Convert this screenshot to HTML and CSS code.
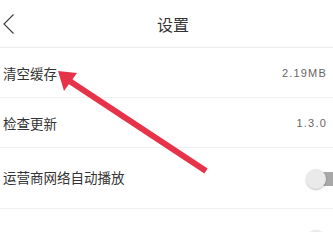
FILE: index.html
```html
<!DOCTYPE html>
<html lang="zh-CN">
<head>
  <meta charset="UTF-8">
  <meta name="viewport" content="width=device-width, initial-scale=1">
  <title>设置</title>
  <link rel="stylesheet" href="styles.css">
</head>
<body>

<div class="header">
  <svg class="back" width="12" height="20" viewBox="0 0 12 20">
    <polyline points="10.5,0.5 1,10 10.5,19.5" fill="none" stroke="#444" stroke-width="1.2"/>
  </svg>
  <h1>设置</h1>
</div>

<div class="list">
  <div class="row">
    <span class="label">清空缓存</span>
    <span class="value">2.19MB</span>
  </div>
  <div class="row">
    <span class="label">检查更新</span>
    <span class="value">1.3.0</span>
  </div>
  <div class="row tall">
    <span class="label">运营商网络自动播放</span>
    <span class="switch"><span class="knob"></span></span>
  </div>
  <div class="row tall">
    <span class="label"></span>
    <span class="switch"><span class="knob"></span></span>
  </div>
</div>

<!-- annotation arrow drawn over the list -->
<svg class="arrow" width="333" height="232" viewBox="0 0 333 232">
  <line x1="206" y1="171" x2="68" y2="80" stroke="#e6334a" stroke-width="6" stroke-linecap="butt"/>
  <polygon points="58,71 77,73 64,91" fill="#e6334a"/>
</svg>

</body>
</html>
```

FILE: styles.css
```css
* {
  box-sizing: border-box;
}

body {
  font-family: "Noto Sans CJK SC", "Noto Sans", sans-serif;
  margin: 0;
  background-color: #fff;
  color: #333;
  width: 333px;
  height: 232px;
  overflow: hidden;
  position: relative;
}

.header {
  height: 48px;
  border-bottom: 1px solid #ededed;
  display: flex;
  align-items: center;
}

.back {
  margin-left: 3px;
  margin-top: 1px;
}

.header h1 {
  flex: 1;
  margin: 0;
  padding-left: 142px;
  font-size: 16px;
  font-weight: normal;
  color: #333;
}

.row {
  height: 50px;
  border-bottom: 1px solid #f0f0f0;
  display: flex;
  align-items: center;
  justify-content: space-between;
  padding-left: 3px;
  padding-right: 6px;
}

.row.tall {
  height: 61px;
  padding-right: 0;
}

.label {
  font-size: 13.5px;
  color: #333;
}

.tall .label {
  margin-top: -3px;
}

.value {
  font-family: "Liberation Sans", sans-serif;
  font-size: 11px;
  color: #666;
  letter-spacing: 1.2px;
}

.switch {
  width: 17px;
  height: 14px;
  background-color: #a8a8a8;
  position: relative;
  margin-top: 1px;
}

.knob {
  position: absolute;
  left: -10px;
  top: -3px;
  width: 20px;
  height: 20px;
  border-radius: 50%;
  background-color: #eaeaea;
  box-shadow: 0 1px 2px rgba(0, 0, 0, 0.25);
}

.arrow {
  position: absolute;
  left: 0;
  top: 0;
  pointer-events: none;
}
```
